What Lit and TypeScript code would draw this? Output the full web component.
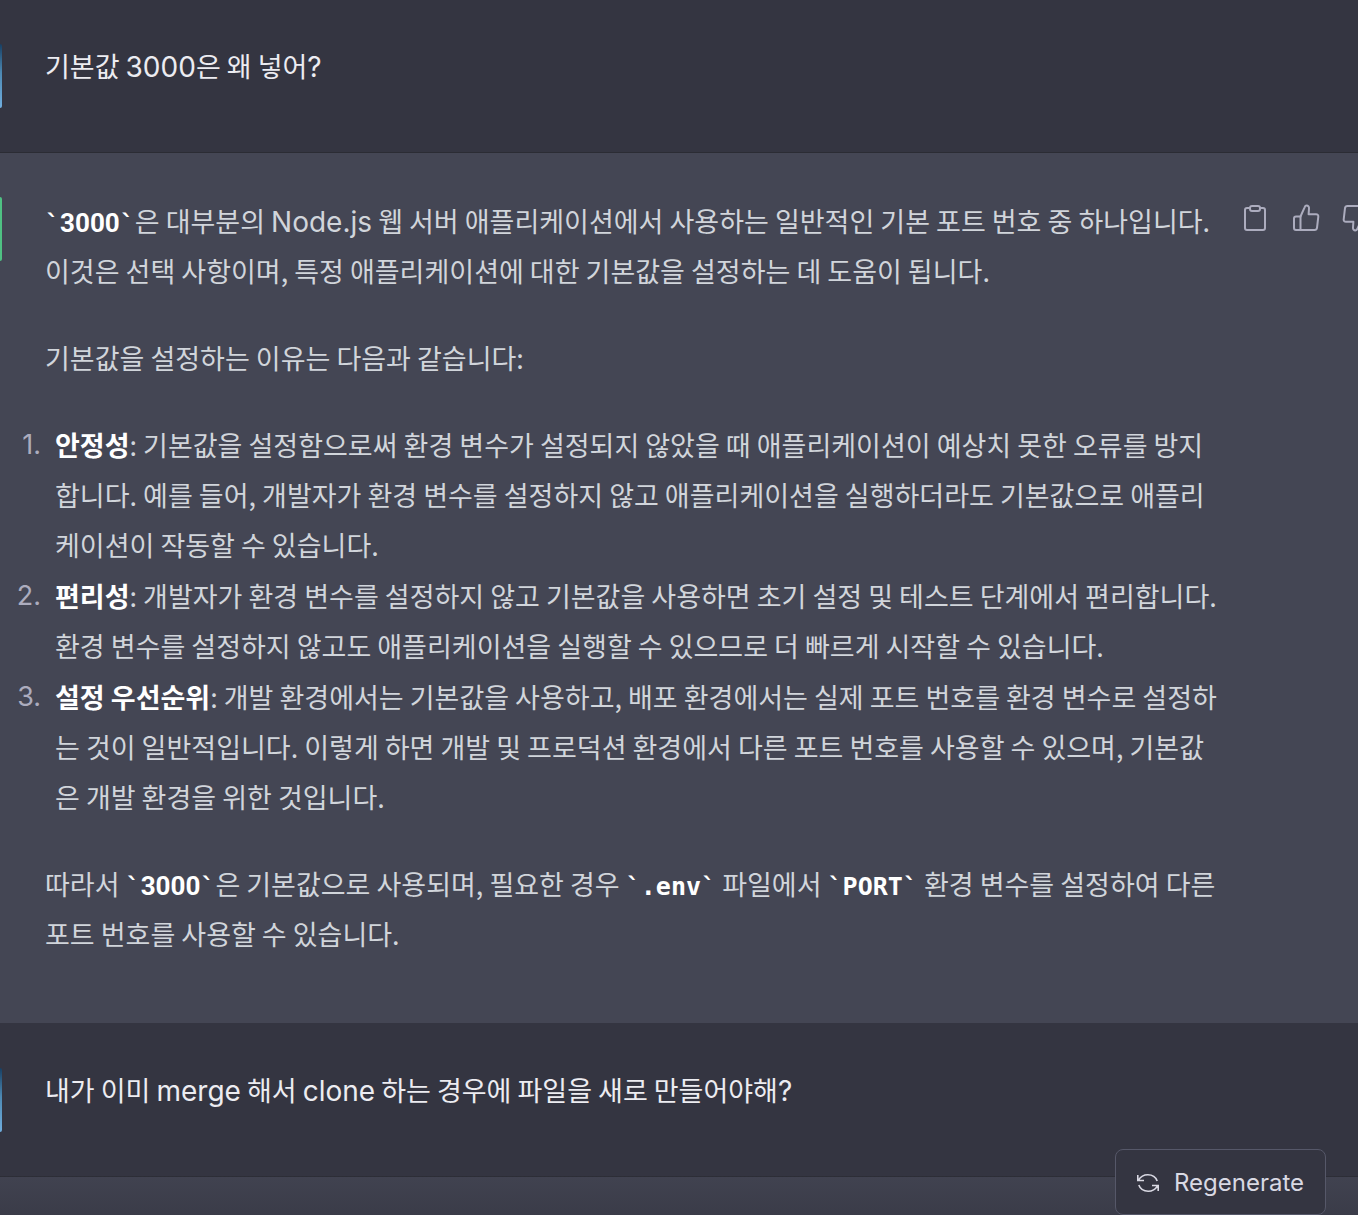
import { LitElement, html, css, svg } from "lit";
import { customElement, property } from "lit/decorators.js";

const clipboardIcon = svg`
  <path d="M8 4H5a2 2 0 0 0-2 2v18a2 2 0 0 0 2 2h16a2 2 0 0 0 2-2V6a2 2 0 0 0-2-2h-3" />
  <rect x="8" y="2" width="10" height="5" rx="2" />`;

const thumbUpIcon = svg`
  <path d="M8.500 12.500H4a2 2 0 0 0-2 2V24a2 2 0 0 0 2 2h4.500z" />
  <path d="M8.500 12.500L12.600 3.300C13 2.200 13.700 1.500 14.600 1.500c1.500 0 2.600 1.300 2.400 3L16.600 10.200H24c1.600 0 2.500 1 2.300 2.500L25 23.800c-.2 1.400-1.200 2.200-2.500 2.200h-14" />`;

@customElement("chat-message")
export class ChatMessage extends LitElement {
  @property({ reflect: true }) role = "user";

  static styles = css`
    :host {
      display: flex;
      padding: 41px 0 44px;
      color: #ececf1;
      background: #343541;
      border-bottom: 1px solid #2b2c34;
    }
    :host([role="assistant"]) {
      color: #d1d5db;
      background: #444654;
      padding-bottom: 64px;
      border-bottom-color: #343541;
    }
    .avatar {
      flex: none;
      width: 2px;
      height: 64px;
      margin: 3px 43px 0 0;
      border-radius: 0 2px 2px 0;
      background: linear-gradient(#173f63, #4d89b3 45%, #70aede);
    }
    .avatar.assistant {
      background: #4fc183;
    }
    .body {
      flex: 1;
      min-width: 0;
      padding-right: 20px;
    }
    .body.assistant {
      padding-top: 2px;
    }
  `;

  render() {
    return html`
      <div class="avatar ${this.role}"></div>
      <div class="body ${this.role}"><slot></slot></div>
      <slot name="actions"></slot>
    `;
  }
}

@customElement("app-root")
export class AppRoot extends LitElement {
  static styles = css`
    :host {
      display: block;
      position: relative;
      min-height: 100vh;
      overflow: hidden;
      background: #444654;
      font-family: "Noto Sans CJK KR", sans-serif;
      font-size: 27px;
      line-height: 50px;
    }
    p {
      margin: 0;
    }
    .answer {
      display: flex;
      flex-direction: column;
      gap: 37px;
    }
    .latin {
      font-family: Inter, sans-serif;
      font-size: 28px;
      line-height: 1;
    }
    .steps {
      list-style: none;
      counter-reset: step;
      display: flex;
      flex-direction: column;
      gap: 1px;
      margin: 0;
      padding: 0;
    }
    .steps li {
      counter-increment: step;
      display: flex;
      gap: 14px;
      margin-left: -40px;
    }
    .steps li::before {
      content: counter(step) ".";
      flex: none;
      width: 36px;
      text-align: right;
      font-family: Inter, sans-serif;
      color: #acacbe;
    }
    strong {
      font-weight: 700;
      color: #fff;
    }
    code {
      font-family: "DejaVu Sans Mono", monospace;
      font-size: 25px;
      font-weight: 700;
      line-height: 1;
      color: #fff;
    }
    code::before,
    code::after {
      content: "\`";
    }
    .num {
      font-family: Roboto, sans-serif;
      font-size: 26px;
    }
    .actions {
      flex: none;
      display: flex;
      gap: 22px;
      margin-right: -12px;
      padding-top: 10px;
      height: 28px;
    }
    button {
      font: inherit;
      color: #acacbe;
      background: none;
      border: 0;
      padding: 0;
      cursor: pointer;
    }
    svg {
      display: block;
      fill: none;
      stroke: currentColor;
      stroke-width: 2;
      stroke-linecap: round;
      stroke-linejoin: round;
    }
    .flip {
      transform: rotate(180deg);
    }
    .fade {
      position: absolute;
      inset: auto 0 0;
      height: 60px;
      background: linear-gradient(rgba(52, 53, 65, 0), rgba(52, 53, 65, 0.6));
    }
    .regenerate {
      position: absolute;
      right: 32px;
      bottom: 0;
      display: flex;
      align-items: center;
      gap: 14px;
      padding: 8px 21px 6px 20px;
      border: 1px solid #565869;
      border-radius: 8px;
      background: #343541;
      color: #d9d9e3;
      font-family: Inter, sans-serif;
      font-size: 24px;
    }
    .regenerate svg {
      stroke-width: 1.6;
      stroke-linecap: butt;
      stroke-linejoin: miter;
    }
  `;

  private icon(shape: unknown, flip = false) {
    return html`<svg class=${flip ? "flip" : ""} width="28" height="28" viewBox="0 0 28 28" aria-hidden="true">${shape}</svg>`;
  }

  render() {
    return html`
      <chat-message role="user">
        <p>기본값 <span class="latin">3000</span>은 왜 넣어<span class="latin">?</span></p>
      </chat-message>

      <chat-message role="assistant">
        <div class="answer">
          <p><code><span class="num">3000</span></code>은 대부분의 <span class="latin">Node.js</span> 웹 서버 애플리케이션에서 사용하는 일반적인 기본 포트 번호 중 하나입니다. 이것은 선택 사항이며, 특정 애플리케이션에 대한 기본값을 설정하는 데 도움이 됩니다.</p>
          <p>기본값을 설정하는 이유는 다음과 같습니다:</p>
          <ol class="steps">
            <li><div><strong>안정성</strong>: 기본값을 설정함으로써 환경 변수가 설정되지 않았을 때 애플리케이션이 예상치 못한 오류를 방지합니다. 예를 들어, 개발자가 환경 변수를 설정하지 않고 애플리케이션을 실행하더라도 기본값으로 애플리케이션이 작동할 수 있습니다.</div></li>
            <li><div><strong>편리성</strong>: 개발자가 환경 변수를 설정하지 않고 기본값을 사용하면 초기 설정 및 테스트 단계에서 편리합니다. 환경 변수를 설정하지 않고도 애플리케이션을 실행할 수 있으므로 더 빠르게 시작할 수 있습니다.</div></li>
            <li><div><strong>설정 우선순위</strong>: 개발 환경에서는 기본값을 사용하고, 배포 환경에서는 실제 포트 번호를 환경 변수로 설정하는 것이 일반적입니다. 이렇게 하면 개발 및 프로덕션 환경에서 다른 포트 번호를 사용할 수 있으며, 기본값은 개발 환경을 위한 것입니다.</div></li>
          </ol>
          <p>따라서 <code><span class="num">3000</span></code>은 기본값으로 사용되며, 필요한 경우 <code>.env</code> 파일에서 <code>PORT</code> 환경 변수를 설정하여 다른 포트 번호를 사용할 수 있습니다.</p>
        </div>
        <div class="actions" slot="actions">
          <button aria-label="복사">${this.icon(clipboardIcon)}</button>
          <button aria-label="좋아요">${this.icon(thumbUpIcon)}</button>
          <button aria-label="싫어요">${this.icon(thumbUpIcon, true)}</button>
        </div>
      </chat-message>

      <chat-message role="user">
        <p>내가 이미 <span class="latin">merge</span> 해서 <span class="latin">clone</span> 하는 경우에 파일을 새로 만들어야해<span class="latin">?</span></p>
      </chat-message>

      <div class="fade"></div>
      <button class="regenerate">
        <svg width="24" height="20" viewBox="0 0 24 20" aria-hidden="true">
          <path d="M1.800 2v5.500H8M2.500 7.200C4.500 3.800 7.800 1.800 11.800 1.800c4.400 0 8 2.400 9.400 6.200" />
          <path d="M22.200 18v-5.500H16M21.500 12.800c-2 3.400-5.300 5.400-9.300 5.400-4.400 0-8-2.400-9.400-6.200" />
        </svg>
        Regenerate
      </button>
    `;
  }
}
